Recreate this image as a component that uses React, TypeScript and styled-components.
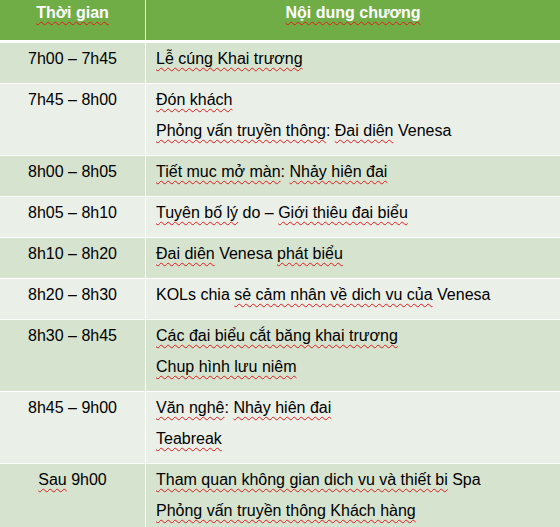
import React from "react";
import styled, { createGlobalStyle } from "styled-components";

const GlobalStyle = createGlobalStyle`
  html, body {
    margin: 0;
    padding: 0;
    background: #ffffff;
  }
  body {
    font-family: "Liberation Sans", Arial, sans-serif;
  }
`;

const Schedule = styled.div`
  width: 560px;
  height: 527px;
  overflow: hidden;
  display: grid;
  grid-template-columns: 145px 1fr;
  column-gap: 1px;
  row-gap: 1px;
  background: #ffffff;
  font-size: 16px;
  color: #000000;
`;

const HeadCell = styled.div`
  background: #70ad47;
  color: #ffffff;
  font-weight: bold;
  text-align: center;
  height: 40px;
  padding-top: 2px;
  box-sizing: border-box;
  line-height: 22px;
  margin-bottom: 2px;
`;

const Cell = styled.div<{ $band: boolean; $center?: boolean }>`
  background: ${(p) => (p.$band ? "#d6e3cf" : "#eaefe8")};
  text-align: ${(p) => (p.$center ? "center" : "left")};
  padding: 5px 0 4px ${(p) => (p.$center ? "0" : "10px")};
`;

const Line = styled.div`
  line-height: 22px;
  margin-bottom: 9px;
  white-space: nowrap;
`;

const Squiggle = styled.span`
  text-decoration-line: underline;
  text-decoration-style: wavy;
  text-decoration-color: #e21b1b;
  text-decoration-thickness: 1px;
  text-underline-offset: 3px;
`;

// {...} marks the words the spell checker flags
const Marked = ({ text }: { text: string }) => (
  <>
    {text.split(/(\{[^}]*\})/).map((part, i) =>
      part.startsWith("{") ? (
        <Squiggle key={i}>{part.slice(1, -1)}</Squiggle>
      ) : (
        <React.Fragment key={i}>{part}</React.Fragment>
      )
    )}
  </>
);

const rows: { time: string; items: string[] }[] = [
  { time: "7h00 – 7h45", items: ["{Lễ cúng Khai trương}"] },
  {
    time: "7h45 – 8h00",
    items: ["{Đón khách}", "{Phỏng vấn truyền thông}: {Đai diên} Venesa"],
  },
  { time: "8h00 – 8h05", items: ["{Tiết muc mở màn}: {Nhảy hiên đai}"] },
  { time: "8h05 – 8h10", items: ["{Tuyên bố lý} do – {Giới thiêu đai biểu}"] },
  { time: "8h10 – 8h20", items: ["{Đai diên} Venesa {phát biểu}"] },
  { time: "8h20 – 8h30", items: ["KOLs chia {sẻ cảm nhân về dich vu của} Venesa"] },
  {
    time: "8h30 – 8h45",
    items: ["{Các đai biểu cắt băng khai trương}", "{Chup hình lưu niêm}"],
  },
  { time: "8h45 – 9h00", items: ["{Văn nghê}: {Nhảy hiên đai}", "{Teabreak}"] },
  {
    time: "{Sau} 9h00",
    items: [
      "{Tham quan không gian dich vu và thiết bi} Spa",
      "{Phỏng vấn truyền thông Khách hàng}",
    ],
  },
];

const App = () => {
  return (
    <>
      <GlobalStyle />
      <Schedule>
        <HeadCell>
          <Marked text="{Thời gian}" />
        </HeadCell>
        <HeadCell>
          <Marked text="{Nội dung chương}" />
        </HeadCell>
        {rows.map((row, i) => (
          <React.Fragment key={i}>
            <Cell $band={i % 2 === 0} $center>
              <Line>
                <Marked text={row.time} />
              </Line>
            </Cell>
            <Cell $band={i % 2 === 0}>
              {row.items.map((item, j) => (
                <Line key={j}>
                  <Marked text={item} />
                </Line>
              ))}
            </Cell>
          </React.Fragment>
        ))}
      </Schedule>
    </>
  );
};

export default App;
